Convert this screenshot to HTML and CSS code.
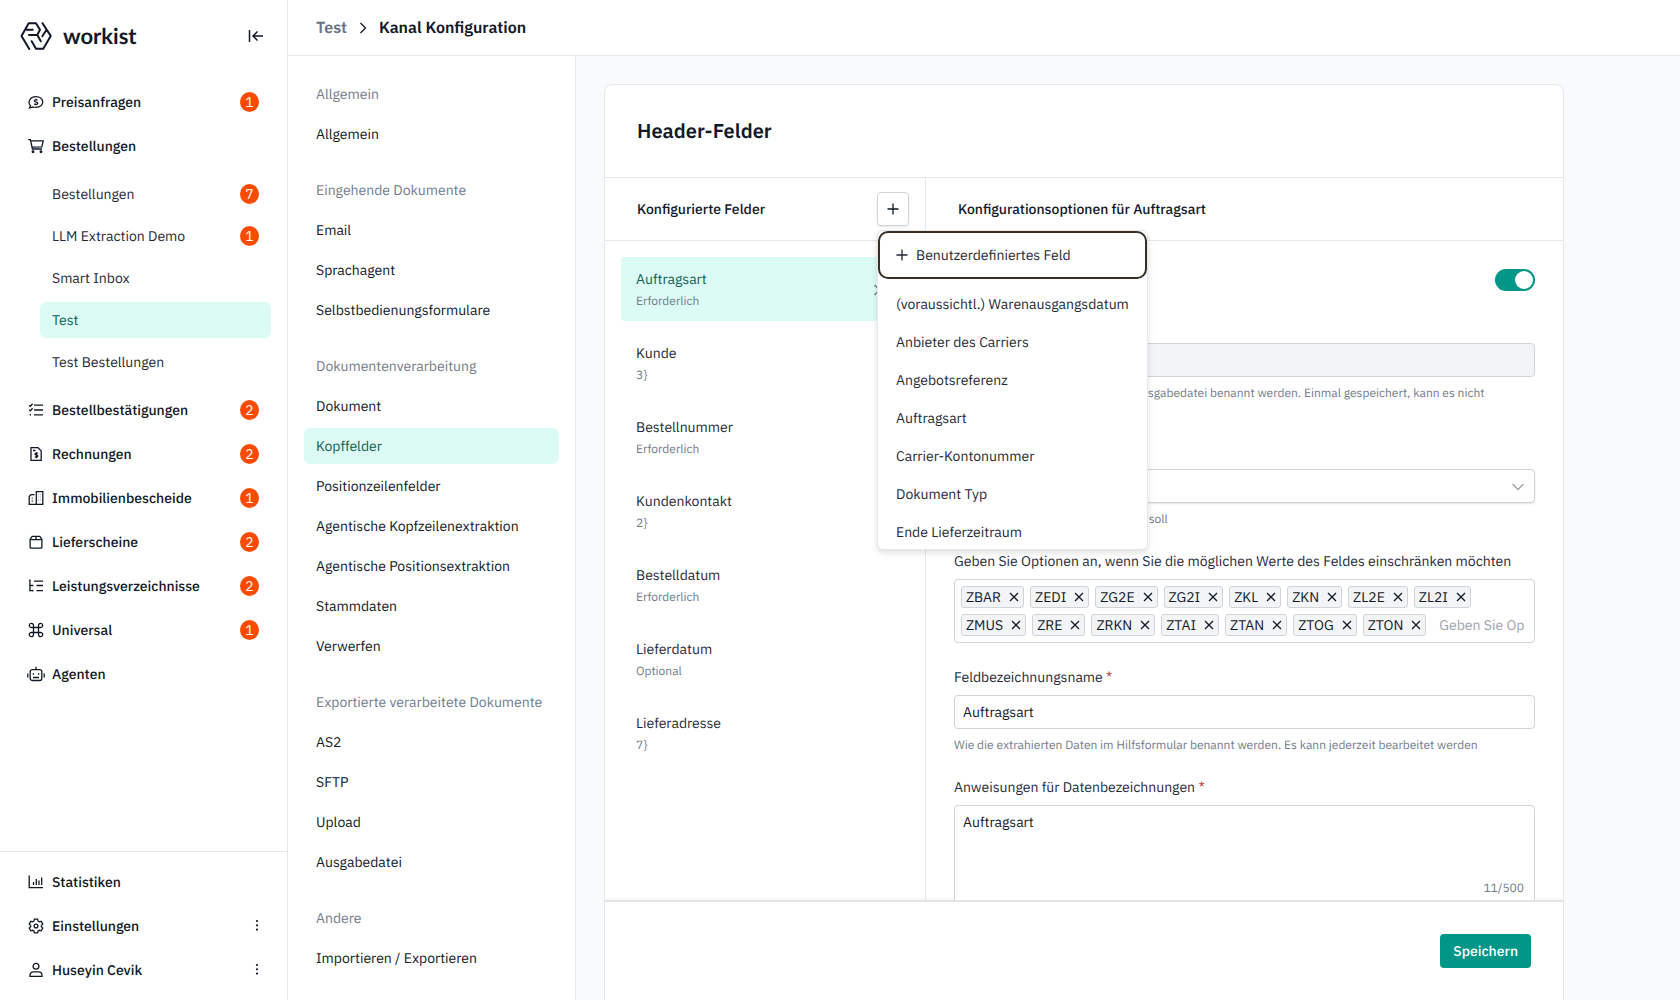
FILE: index.html
```html
<!DOCTYPE html>
<html lang="de">
<head>
  <meta charset="UTF-8">
  <title>Workist – Kanal Konfiguration</title>
  <meta name="viewport" content="width=device-width, initial-scale=1.0">
  <link rel="stylesheet" href="styles.css">
</head>
<body>
  <svg class="sprite" aria-hidden="true">
    <symbol id="i-quote" viewBox="0 0 16 16"><path d="M1.500 13.800l1-2.200C.9 10 .9 7.500 1.700 6 2.800 3.800 5 2.600 8 2.600c4 0 6.800 2.300 6.800 5.400s-2.800 5.300-6.800 5.300c-1.200 0-2 0-2.900-.3z"/><path d="M9.700 6.300C9.100 5.600 6.400 5.500 6.400 6.900c0 1.600 3.400.7 3.400 2.300 0 1.500-2.800 1.300-3.500.5M8.100 4.700v1M8.100 10.200v1"/></symbol>
    <symbol id="i-cart" viewBox="0 0 16 16"><path d="M.2 1.600h2.200l2 9.400H14M2.800 2.800h12.400l-1.400 6-9.800.4"/><circle cx="5" cy="13.800" r=".8"/><circle cx="13" cy="13.800" r=".8"/></symbol>
    <symbol id="i-checks" viewBox="0 0 16 16"><path d="M1.200 3.200l1.200 1.100L4.600 1.800M1.200 7.700l1.200 1.100 2.200-2.500M6 3.200h9M6 8h9M6 12.800h9M2.300 12v1.500"/></symbol>
    <symbol id="i-invoice" viewBox="0 0 16 16"><path d="M3 1.700h7l3.200 3.200v9.400H3zM5 4.500h2.500"/><path d="M9.900 7.400c-.6-.6-2.900-.6-2.900.6 0 1.300 2.900.7 2.900 2.100 0 1.200-2.400 1.200-3.100.5M8.400 6.200v6"/></symbol>
    <symbol id="i-building" viewBox="0 0 16 16"><path d="M6.500 4.700H3L1.200 6.500v7.800h13.600V1.600H8.300v12.700M3.700 8.200h1M3.700 11h1M10.600 4.500h.3M12.500 4.500h.3M10.600 7.200h.3M12.500 7.200h.3M10.600 10h.3M12.500 10h.3"/></symbol>
    <symbol id="i-box" viewBox="0 0 16 16"><path d="M4.200 2.300h7.600l2.100 3v7.900a1 1 0 0 1-1 1H3.100a1 1 0 0 1-1-1V5.300zM2.100 5.700h11.800M8 2.300v3.400"/></symbol>
    <symbol id="i-tree" viewBox="0 0 16 16"><path d="M1.900 1.500v11.100h3.300M1.900 7.500h3.300M6 3.100h9M8.500 7.500H15M8.500 12.600H15M1.200 2.300h1.500M4.700 6.700v1.600M4.700 11.800v1.600"/></symbol>
    <symbol id="i-command" viewBox="0 0 16 16"><path d="M5.500 5.500v-2a2.100 2.100 0 1 0-2.100 2h9.200a2.100 2.100 0 1 0-2.100-2v9a2.100 2.100 0 1 0 2.100-2H3.400a2.100 2.100 0 1 0 2.100 2z"/></symbol>
    <symbol id="i-robot" viewBox="0 0 18 16"><rect x="3.200" y="3.700" width="11.600" height="10.800" rx="2"/><path d="M9 .8v3M.8 7.500v4M17.200 7.500v4M6.400 7.300v1.500M11.600 7.300v1.500M6 11.500h6"/></symbol>
    <symbol id="i-stats" viewBox="0 0 16 16"><path d="M1.200 1.500v12.200H15M5.500 8v3M8.300 5v6M11 6.500V11M13.700 3.500V11"/></symbol>
    <symbol id="i-gear" viewBox="0 0 16 16"><circle cx="8" cy="8" r="1.900"/><path d="M6.400 1.200h3.200l.5 1.900 1.200.7 1.900-.5 1.600 2.700-1.400 1.400v1.300l1.400 1.400-1.600 2.700-1.900-.5-1.200.7-.5 1.900H6.400l-.5-1.900-1.200-.7-1.900.5-1.600-2.700 1.400-1.400V7.400L1.200 6l1.600-2.700 1.900.5 1.200-.7z"/></symbol>
    <symbol id="i-user" viewBox="0 0 16 16"><circle cx="8" cy="4.300" r="2.900"/><path d="M2 14.400v-1.200a3.400 3.400 0 0 1 3.400-3.400h5.200a3.400 3.400 0 0 1 3.400 3.400v1.200z"/></symbol>
    <symbol id="i-dots" viewBox="0 0 16 16"><g fill="currentColor" stroke="none"><circle cx="8" cy="3" r="1.100"/><circle cx="8" cy="7.300" r="1.100"/><circle cx="8" cy="11.600" r="1.100"/></g></symbol>
    <symbol id="i-plus" viewBox="0 0 12 12"><path d="M6 .5v11M.5 6h11"/></symbol>
    <symbol id="i-close" viewBox="0 0 10 10"><path d="M1 1l8 8M9 1L1 9"/></symbol>
    <symbol id="i-chevron" viewBox="0 0 8 12"><path d="M1.500 1l5 5-5 5"/></symbol>
  </svg>

  <div class="app">
    <aside class="sidebar">
      <div class="brand">
        <a class="brand-link" href="#">
          <svg class="brand-mark" viewBox="0 0 32 30" aria-hidden="true"><path d="M9.300 28L1.500 15 8.700 2.300H16l4 6.400-2.700 5.200H9M5.500 8.700h7.200M17.300 13.900l3.500 6.300M22.500 2.200L30.700 14.900 23.300 27.700H16l-4.300-7.500M22.300 15.200l4.300-6.500"/></svg>
          <span class="brand-name">workist</span>
        </a>
        <button class="icon-button" aria-label="Menü einklappen">
          <svg class="collapse-icon" viewBox="0 0 16 14" aria-hidden="true"><path d="M1.500 1v12M15 7H5M9.500 2.500L5 7l4.500 4.500"/></svg>
        </button>
      </div>

      <nav class="main-nav">
        <a class="nav-item" href="#"><svg class="icon"><use href="#i-quote"/></svg>Preisanfragen<span class="badge">1</span></a>
        <a class="nav-item" href="#"><svg class="icon"><use href="#i-cart"/></svg>Bestellungen</a>
        <div class="sub-nav">
          <a class="sub-item" href="#">Bestellungen<span class="badge">7</span></a>
          <a class="sub-item" href="#">LLM Extraction Demo<span class="badge">1</span></a>
          <a class="sub-item" href="#">Smart Inbox</a>
          <a class="sub-item active" href="#">Test</a>
          <a class="sub-item" href="#">Test Bestellungen</a>
        </div>
        <a class="nav-item" href="#"><svg class="icon"><use href="#i-checks"/></svg>Bestellbestätigungen<span class="badge">2</span></a>
        <a class="nav-item" href="#"><svg class="icon"><use href="#i-invoice"/></svg>Rechnungen<span class="badge">2</span></a>
        <a class="nav-item" href="#"><svg class="icon"><use href="#i-building"/></svg>Immobilienbescheide<span class="badge">1</span></a>
        <a class="nav-item" href="#"><svg class="icon"><use href="#i-box"/></svg>Lieferscheine<span class="badge">2</span></a>
        <a class="nav-item" href="#"><svg class="icon"><use href="#i-tree"/></svg>Leistungsverzeichnisse<span class="badge">2</span></a>
        <a class="nav-item" href="#"><svg class="icon"><use href="#i-command"/></svg>Universal<span class="badge">1</span></a>
        <a class="nav-item" href="#"><svg class="icon wide"><use href="#i-robot"/></svg>Agenten</a>
      </nav>

      <nav class="bottom-nav">
        <a class="nav-item" href="#"><svg class="icon"><use href="#i-stats"/></svg>Statistiken</a>
        <a class="nav-item" href="#"><svg class="icon"><use href="#i-gear"/></svg>Einstellungen<svg class="icon more"><use href="#i-dots"/></svg></a>
        <a class="nav-item" href="#"><svg class="icon"><use href="#i-user"/></svg>Huseyin Cevik<svg class="icon more"><use href="#i-dots"/></svg></a>
      </nav>
    </aside>

    <div class="page">
      <header class="topbar">
        <a class="crumb" href="#">Test</a>
        <svg class="chevron"><use href="#i-chevron"/></svg>
        <span class="crumb-current">Kanal Konfiguration</span>
      </header>

      <div class="workspace">
        <nav class="settings-nav">
          <div class="group">
            <h3>Allgemein</h3>
            <a href="#">Allgemein</a>
          </div>
          <div class="group">
            <h3>Eingehende Dokumente</h3>
            <a href="#">Email</a>
            <a href="#">Sprachagent</a>
            <a href="#">Selbstbedienungsformulare</a>
          </div>
          <div class="group">
            <h3>Dokumentenverarbeitung</h3>
            <a href="#">Dokument</a>
            <a class="active" href="#">Kopffelder</a>
            <a href="#">Positionzeilenfelder</a>
            <a href="#">Agentische Kopfzeilenextraktion</a>
            <a href="#">Agentische Positionsextraktion</a>
            <a href="#">Stammdaten</a>
            <a href="#">Verwerfen</a>
          </div>
          <div class="group">
            <h3>Exportierte verarbeitete Dokumente</h3>
            <a href="#">AS2</a>
            <a href="#">SFTP</a>
            <a href="#">Upload</a>
            <a href="#">Ausgabedatei</a>
          </div>
          <div class="group">
            <h3>Andere</h3>
            <a href="#">Importieren / Exportieren</a>
          </div>
        </nav>

        <main class="content">
          <section class="card">
            <h1>Header-Felder</h1>

            <div class="columns">
              <div class="fields">
                <div class="column-head">
                  <h2>Konfigurierte Felder</h2>
                  <div class="add">
                    <button class="add-button" aria-label="Feld hinzufügen"><svg class="plus"><use href="#i-plus"/></svg></button>
                    <div class="menu">
                      <button class="menu-item custom"><svg class="plus"><use href="#i-plus"/></svg>Benutzerdefiniertes Feld</button>
                      <button class="menu-item">(voraussichtl.) Warenausgangsdatum</button>
                      <button class="menu-item">Anbieter des Carriers</button>
                      <button class="menu-item">Angebotsreferenz</button>
                      <button class="menu-item">Auftragsart</button>
                      <button class="menu-item">Carrier-Kontonummer</button>
                      <button class="menu-item">Dokument Typ</button>
                      <button class="menu-item">Ende Lieferzeitraum</button>
                    </div>
                  </div>
                </div>
                <div class="field-list">
                  <button class="field-item active"><span>Auftragsart</span><small>Erforderlich</small><svg class="chevron"><use href="#i-chevron"/></svg></button>
                  <button class="field-item"><span>Kunde</span><small>3}</small></button>
                  <button class="field-item"><span>Bestellnummer</span><small>Erforderlich</small></button>
                  <button class="field-item"><span>Kundenkontakt</span><small>2}</small></button>
                  <button class="field-item"><span>Bestelldatum</span><small>Erforderlich</small></button>
                  <button class="field-item"><span>Lieferdatum</span><small>Optional</small></button>
                  <button class="field-item"><span>Lieferadresse</span><small>7}</small></button>
                </div>
              </div>

              <div class="options">
                <div class="column-head">
                  <h2>Konfigurationsoptionen für Auftragsart</h2>
                </div>
                <form class="options-form">
                  <div class="toggle-row">
                    <label for="required">Erforderlich</label>
                    <input class="toggle" type="checkbox" id="required" checked>
                  </div>
                  <div class="form-group">
                    <label for="outputName">Ausgabename</label>
                    <input class="control" type="text" id="outputName" disabled>
                    <p class="hint two-lines">Wie die extrahierten Daten in der Ausgabedatei benannt werden. Einmal gespeichert, kann es nicht</p>
                  </div>
                  <div class="form-group">
                    <label for="dataType">Datentyp</label>
                    <div class="select">
                      <select class="control" id="dataType"><option>Text</option></select>
                      <svg class="select-arrow" viewBox="0 0 12 8" aria-hidden="true"><path d="M.5 1L6 6.500 11.500 1"/></svg>
                    </div>
                    <p class="hint">Datentyp, der dafür erkannt werden soll</p>
                  </div>
                  <div class="form-group">
                    <label for="values">Geben Sie Optionen an, wenn Sie die möglichen Werte des Feldes einschränken möchten</label>
                    <div class="tags">
                      <span class="tag">ZBAR<button type="button" aria-label="ZBAR entfernen"><svg><use href="#i-close"/></svg></button></span>
                      <span class="tag">ZEDI<button type="button" aria-label="ZEDI entfernen"><svg><use href="#i-close"/></svg></button></span>
                      <span class="tag">ZG2E<button type="button" aria-label="ZG2E entfernen"><svg><use href="#i-close"/></svg></button></span>
                      <span class="tag">ZG2I<button type="button" aria-label="ZG2I entfernen"><svg><use href="#i-close"/></svg></button></span>
                      <span class="tag">ZKL<button type="button" aria-label="ZKL entfernen"><svg><use href="#i-close"/></svg></button></span>
                      <span class="tag">ZKN<button type="button" aria-label="ZKN entfernen"><svg><use href="#i-close"/></svg></button></span>
                      <span class="tag">ZL2E<button type="button" aria-label="ZL2E entfernen"><svg><use href="#i-close"/></svg></button></span>
                      <span class="tag">ZL2I<button type="button" aria-label="ZL2I entfernen"><svg><use href="#i-close"/></svg></button></span>
                      <span class="tag">ZMUS<button type="button" aria-label="ZMUS entfernen"><svg><use href="#i-close"/></svg></button></span>
                      <span class="tag">ZRE<button type="button" aria-label="ZRE entfernen"><svg><use href="#i-close"/></svg></button></span>
                      <span class="tag">ZRKN<button type="button" aria-label="ZRKN entfernen"><svg><use href="#i-close"/></svg></button></span>
                      <span class="tag">ZTAI<button type="button" aria-label="ZTAI entfernen"><svg><use href="#i-close"/></svg></button></span>
                      <span class="tag">ZTAN<button type="button" aria-label="ZTAN entfernen"><svg><use href="#i-close"/></svg></button></span>
                      <span class="tag">ZTOG<button type="button" aria-label="ZTOG entfernen"><svg><use href="#i-close"/></svg></button></span>
                      <span class="tag">ZTON<button type="button" aria-label="ZTON entfernen"><svg><use href="#i-close"/></svg></button></span>
                      <input type="text" id="values" placeholder="Geben Sie Op">
                    </div>
                  </div>
                  <div class="form-group">
                    <label for="labelName">Feldbezeichnungsname <span class="required">*</span></label>
                    <input class="control" type="text" id="labelName" value="Auftragsart">
                    <p class="hint">Wie die extrahierten Daten im Hilfsformular benannt werden. Es kann jederzeit bearbeitet werden</p>
                  </div>
                  <div class="form-group">
                    <label for="instructions">Anweisungen für Datenbezeichnungen <span class="required">*</span></label>
                    <div class="textarea">
                      <textarea class="control" id="instructions">Auftragsart</textarea>
                      <span class="counter">11/500</span>
                    </div>
                  </div>
                </form>
              </div>
            </div>

            <footer class="card-footer">
              <button class="save">Speichern</button>
            </footer>
          </section>
        </main>
      </div>
    </div>
  </div>
</body>
</html>
```
FILE: styles.css
```css
* {
  box-sizing: border-box;
}
body {
  margin: 0;
  font-family: 'IBM Plex Sans', Roboto, sans-serif;
  font-size: 14px;
  line-height: 20px;
  text-rendering: geometricPrecision;
  color: #111827;
  background: #f9fafb;
}
h1, h2, h3, p {
  margin: 0;
}
a {
  color: inherit;
  text-decoration: none;
}
button, input, select, textarea {
  font: inherit;
  color: inherit;
  text-rendering: inherit;
}
button {
  padding: 0;
  border: none;
  background: none;
  cursor: pointer;
}
svg {
  flex-shrink: 0;
  fill: none;
  stroke: currentColor;
  stroke-width: 1.3;
}
.sprite {
  display: none;
}
.app {
  display: flex;
  height: 100vh;
  overflow: hidden;
}

/* sidebar */
.sidebar {
  display: flex;
  flex-direction: column;
  flex: 0 0 288px;
  background: white;
  border-right: 1px solid #e5e7eb;
}
.brand {
  display: flex;
  align-items: center;
  justify-content: space-between;
  height: 72px;
  padding: 0 23px 0 20px;
}
.brand-link {
  display: flex;
  align-items: center;
  gap: 11px;
}
.brand-mark {
  width: 32px;
  height: 30px;
  stroke-width: 2;
  stroke-linecap: round;
  stroke-linejoin: round;
}
.brand-name {
  font-family: Lato, sans-serif;
  font-size: 22px;
  font-weight: 700;
  line-height: 24px;
}
.icon-button {
  display: flex;
}
.collapse-icon {
  width: 16px;
  height: 14px;
  stroke-width: 1.5;
}
.main-nav {
  flex: 1;
  padding-top: 8px;
}
.nav-item {
  display: flex;
  align-items: center;
  gap: 8px;
  height: 44px;
  padding: 0 28px;
  font-weight: 500;
}
.icon {
  width: 16px;
  height: 16px;
}
.icon.wide {
  width: 18px;
  margin: 0 -1px;
}
.icon.more {
  margin: 0 -6px 0 auto;
}
.badge {
  width: 19px;
  height: 20px;
  margin-left: auto;
  border-radius: 50%;
  background: #fa4b00;
  color: white;
  font-weight: 400;
  text-align: center;
}
.sub-nav {
  display: flex;
  flex-direction: column;
  gap: 6px;
  padding: 8px 16px 8px 40px;
}
.sub-item {
  display: flex;
  align-items: center;
  height: 36px;
  padding: 0 12px;
  border-radius: 6px;
  color: #1f2937;
}
.sub-item.active {
  background: #dcfbf5;
  color: #115e55;
}
.bottom-nav {
  padding: 8px 0;
  border-top: 1px solid #e5e7eb;
}

/* header */
.page {
  display: flex;
  flex-direction: column;
  flex: 1;
  min-width: 0;
}
.topbar {
  display: flex;
  align-items: center;
  gap: 12px;
  flex: 0 0 56px;
  padding: 0 28px;
  background: white;
  border-bottom: 1px solid #e5e7eb;
  font-size: 16px;
  font-weight: 600;
}
.crumb {
  color: #6b7280;
}
.chevron {
  width: 8px;
  height: 12px;
}
.workspace {
  display: flex;
  flex: 1;
  min-height: 0;
}

/* settings navigation */
.settings-nav {
  display: flex;
  flex-direction: column;
  gap: 20px;
  flex: 0 0 288px;
  padding: 20px 16px;
  background: white;
  border-right: 1px solid #e5e7eb;
}
.group {
  display: flex;
  flex-direction: column;
  gap: 4px;
}
.group h3,
.group a {
  padding: 8px 12px;
  border-radius: 6px;
  font-size: 14px;
  font-weight: 400;
  white-space: nowrap;
}
.group h3 {
  color: #737c8c;
}
.group a.active {
  background: #dcfbf5;
  color: #115e55;
}

/* card */
.content {
  flex: 1;
  min-width: 0;
  padding: 28px 28px 0;
}
.card {
  display: flex;
  flex-direction: column;
  max-width: 960px;
  height: 100%;
  background: white;
  border: 1px solid #e5e7eb;
  border-bottom: none;
  border-radius: 8px 8px 0 0;
}
.card h1 {
  padding: 32px;
  border-bottom: 1px solid #e5e7eb;
  font-size: 20px;
  font-weight: 600;
  line-height: 28px;
}
.columns {
  display: grid;
  grid-template-columns: 321px 1fr;
  flex: 1;
  min-height: 0;
}
.fields {
  border-right: 1px solid #e5e7eb;
}
.options {
  display: flex;
  flex-direction: column;
  min-height: 0;
}
.column-head {
  display: flex;
  align-items: center;
  justify-content: space-between;
  height: 63px;
  flex-shrink: 0;
  padding: 0 16px 0 32px;
  border-bottom: 1px solid #e5e7eb;
}
.column-head h2 {
  font-size: 14px;
  font-weight: 500;
}
.add {
  position: relative;
}
.add-button {
  display: flex;
  align-items: center;
  justify-content: center;
  width: 32px;
  height: 34px;
  border: 1px solid #d1d5db;
  border-radius: 4px;
  box-shadow: 0 1px 2px rgba(0, 0, 0, 0.1);
}
.plus {
  width: 12px;
  height: 12px;
}
.menu {
  position: absolute;
  top: 100%;
  left: 0;
  z-index: 1;
  width: 271px;
  max-height: 320px;
  margin-top: 4px;
  overflow: hidden;
  background: white;
  border: 1px solid #e5e7eb;
  border-radius: 6px;
  box-shadow: 0 3px 6px rgba(0, 0, 0, 0.12);
}
.menu-item {
  display: flex;
  align-items: center;
  gap: 8px;
  width: 100%;
  height: 38px;
  padding: 0 18px;
  color: #1f2937;
  white-space: nowrap;
}
.menu-item.custom {
  height: 48px;
  margin-bottom: 6px;
  padding: 0 16px;
  border: 2px solid #3b2f24;
  border-radius: 10px;
}
.field-list {
  display: flex;
  flex-direction: column;
  gap: 10px;
  padding: 16px;
}
.field-item {
  display: grid;
  grid-template-columns: 1fr auto;
  align-items: center;
  row-gap: 4px;
  padding: 12px 28px 10px 15px;
  border-radius: 4px;
  color: #1f2937;
  text-align: left;
}
.field-item small {
  grid-row: 2;
  font-size: 12px;
  line-height: 18px;
  color: #737c8c;
}
.field-item .chevron {
  grid-area: 1 / 2 / 3 / 3;
  color: #6b7280;
}
.field-item.active {
  background: #dcfbf5;
  color: #115e55;
}

/* form */
.options-form {
  display: flex;
  flex-direction: column;
  gap: 24px;
  padding: 28px 28px 0;
  overflow: hidden;
}
.toggle-row {
  display: flex;
  align-items: center;
  justify-content: space-between;
}
.toggle {
  appearance: none;
  width: 40px;
  height: 22px;
  margin: 0;
  padding: 2px;
  border-radius: 11px;
  background: #d1d5db;
}
.toggle::before {
  content: '';
  display: block;
  width: 18px;
  height: 18px;
  border-radius: 50%;
  background: white;
}
.toggle:checked {
  background: #009688;
}
.toggle:checked::before {
  margin-left: auto;
}
.form-group {
  display: flex;
  flex-direction: column;
  gap: 8px;
}
.options-form label {
  color: #1f2937;
}
.required {
  color: #b0322f;
}
.control {
  display: block;
  width: 100%;
  height: 34px;
  padding: 6px 8px;
  border: 1px solid #cfd3da;
  border-radius: 4px;
  background: white;
}
.control:disabled {
  background: #f3f4f6;
}
.hint {
  margin-bottom: -2px;
  font-size: 12px;
  line-height: 18px;
  color: #737c8c;
}
.hint.two-lines {
  min-height: 34px;
}
.select,
.textarea {
  position: relative;
}
.select .control {
  appearance: none;
  box-shadow: 0 1px 2px rgba(0, 0, 0, 0.1);
}
.select-arrow {
  position: absolute;
  top: 14px;
  right: 11px;
  width: 12px;
  height: 8px;
  color: #9ca3af;
}
.tags {
  display: flex;
  flex-wrap: wrap;
  gap: 6px;
  padding: 6px;
  border: 1px solid #cfd3da;
  border-radius: 4px;
}
.tag {
  display: flex;
  align-items: center;
  gap: 8px;
  height: 22px;
  padding: 0 4px;
  border: 1px solid #cfd3da;
  border-radius: 3px;
  background: #f3f4f6;
}
.tag button {
  display: flex;
}
.tag svg {
  width: 10px;
  height: 10px;
}
.tags input {
  flex: 1;
  min-width: 80px;
  width: 80px;
  height: 22px;
  padding: 0 2px 0 7px;
  border: none;
  outline: none;
}
.tags input::placeholder {
  color: #9ca3af;
}
.textarea .control {
  height: 100px;
  resize: none;
}
.counter {
  position: absolute;
  right: 11px;
  bottom: 6px;
  font-size: 12px;
  color: #737c8c;
}
.card-footer {
  display: flex;
  align-items: center;
  justify-content: flex-end;
  flex: 0 0 100px;
  padding: 0 32px;
  border-top: 2px solid #e5e5e5;
  box-shadow: 0 -1px 2px rgba(0, 0, 0, 0.06);
}
.save {
  height: 34px;
  padding: 0 13px;
  border-radius: 4px;
  background: #009688;
  color: white;
  font-weight: 500;
}
```
